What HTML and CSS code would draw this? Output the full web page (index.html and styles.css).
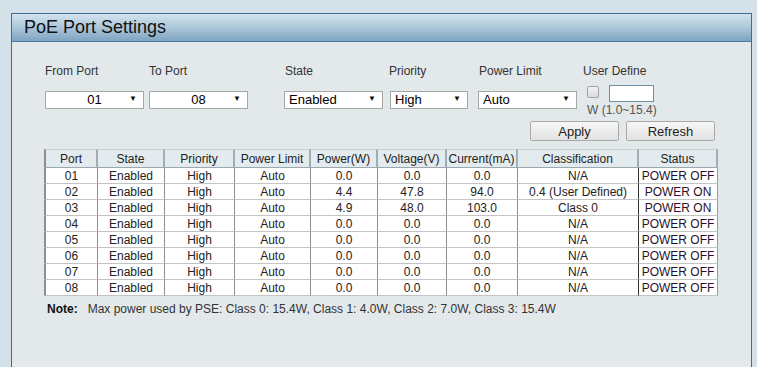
FILE: index.html
```html
<!DOCTYPE html>
<html lang="en">
<head>
  <meta charset="UTF-8">
  <title>PoE Port Settings</title>
  <link rel="stylesheet" href="styles.css">
</head>
<body>
  <div class="panel">
    <div class="panel-head">PoE Port Settings</div>
    <div class="panel-body">
      <div class="form-row">
        <div class="field f-from">
          <label>From Port</label>
          <span class="select w99"><select class="center"><option>01</option></select></span>
        </div>
        <div class="field f-to">
          <label>To Port</label>
          <span class="select w99"><select class="center"><option>08</option></select></span>
        </div>
        <div class="field f-state">
          <label>State</label>
          <span class="select w99"><select><option>Enabled</option></select></span>
        </div>
        <div class="field f-prio">
          <label>Priority</label>
          <span class="select w78"><select><option>High</option></select></span>
        </div>
        <div class="field f-limit">
          <label>Power Limit</label>
          <span class="select w99"><select><option>Auto</option></select></span>
        </div>
        <div class="field f-user">
          <label>User Define</label>
          <div class="user-inputs">
            <input type="checkbox" class="check">
            <input type="text" class="watt">
          </div>
          <div class="hint">W (1.0~15.4)</div>
        </div>
      </div>

      <div class="buttons">
        <button class="btn">Apply</button>
        <button class="btn">Refresh</button>
      </div>

      <table class="ports">
        <thead>
          <tr>
            <th class="c-port">Port</th>
            <th class="c-state">State</th>
            <th class="c-prio">Priority</th>
            <th class="c-limit">Power Limit</th>
            <th class="c-power">Power(W)</th>
            <th class="c-volt">Voltage(V)</th>
            <th class="c-curr">Current(mA)</th>
            <th class="c-class">Classification</th>
            <th class="c-status">Status</th>
          </tr>
        </thead>
        <tbody id="rows"></tbody>
      </table>

      <p class="note"><b>Note:</b><span>Max power used by PSE: Class 0: 15.4W, Class 1: 4.0W, Class 2: 7.0W, Class 3: 15.4W</span></p>
    </div>
  </div>

  <script>
    const ports = [
      ["01", "0.0", "0.0", "0.0", "N/A", "POWER OFF"],
      ["02", "4.4", "47.8", "94.0", "0.4 (User Defined)", "POWER ON"],
      ["03", "4.9", "48.0", "103.0", "Class 0", "POWER ON"],
      ["04", "0.0", "0.0", "0.0", "N/A", "POWER OFF"],
      ["05", "0.0", "0.0", "0.0", "N/A", "POWER OFF"],
      ["06", "0.0", "0.0", "0.0", "N/A", "POWER OFF"],
      ["07", "0.0", "0.0", "0.0", "N/A", "POWER OFF"],
      ["08", "0.0", "0.0", "0.0", "N/A", "POWER OFF"]
    ];

    const tbody = document.getElementById("rows");
    for (const p of ports) {
      const tr = document.createElement("tr");
      const cells = [p[0], "Enabled", "High", "Auto", p[1], p[2], p[3], p[4], p[5]];
      cells.forEach((text, i) => {
        const td = document.createElement("td");
        td.textContent = text;
        if (i === 8) td.className = "status";
        tr.appendChild(td);
      });
      tbody.appendChild(tr);
    }
  </script>
</body>
</html>
```

FILE: styles.css
```css
body {
  margin: 0;
  background-color: #d5e1e8;
  font-family: "Liberation Sans", Arial, sans-serif;
  color: #333;
  overflow: hidden;
}

.panel {
  box-sizing: border-box;
  margin: 13px 0 0 11px;
  width: 741px;
  height: calc(100vh - 13px);
  border: 1px solid #3d6d92;
  border-bottom: none;
  background: #e3e8eb;
}

.panel-head {
  height: 27px;
  line-height: 26px;
  padding-left: 12px;
  font-size: 18px;
  color: #111;
  background: linear-gradient(to bottom, #d2e3ee 0%, #b0cadc 45%, #7ea4c2 100%);
  border-bottom: 1px solid #4d7a9c;
}

.panel-body {
  padding: 22px 0 0 33px;
}

.form-row {
  display: flex;
  align-items: flex-start;
}

.field {
  display: flex;
  flex-direction: column;
}

.field label {
  font-size: 12px;
  height: 14px;
  line-height: 14px;
  margin-bottom: 12px;
}

.f-from { width: 104px; }
.f-to { width: 135px; }
.f-state { width: 106px; }
.f-state label,
.f-limit label { padding-left: 1px; }
.f-prio { width: 88px; }
.f-prio label { margin-left: -1px; }
.f-limit { width: 105px; }

.select {
  position: relative;
  display: block;
  height: 18px;
}

.select.w99 { width: 99px; }
.select.w78 { width: 78px; }

.select select {
  appearance: none;
  -webkit-appearance: none;
  width: 100%;
  height: 18px;
  margin: 0;
  padding: 0 18px 0 4px;
  border: 1px solid #a6a6a6;
  background: #fff;
  font-family: "Liberation Sans", Arial, sans-serif;
  font-size: 13px;
  color: #000;
  line-height: 16px;
}

.select select.center {
  text-align-last: center;
  padding-left: 18px;
}

.select::after {
  content: "\25BC";
  position: absolute;
  right: 7px;
  top: 4px;
  font-size: 8px;
  line-height: 10px;
  color: #111;
  pointer-events: none;
}

.user-inputs {
  display: flex;
  align-items: flex-start;
  margin-top: -5px;
  padding-left: 4px;
}

.check {
  appearance: none;
  -webkit-appearance: none;
  box-sizing: border-box;
  width: 12px;
  height: 12px;
  margin: 1px 10px 0 0;
  border: 1px solid #a3a3a3;
  border-radius: 2px;
  background: linear-gradient(to bottom, #f2f2f2, #dcdcdc);
}

.watt {
  width: 43px;
  height: 15px;
  padding: 0;
  margin: 0;
  border: 1px solid #6f8fa6;
  background: #fff;
}

.hint {
  font-size: 12px;
  line-height: 14px;
  color: #555;
  padding-left: 4px;
  margin-top: 1px;
}

.buttons {
  display: flex;
  gap: 7px;
  margin: 4px 0 0 485px;
}

.btn {
  width: 89px;
  height: 20px;
  padding: 0;
  border: 1px solid #a9a9a9;
  border-radius: 2px;
  background: linear-gradient(to bottom, #f7f7f7, #e2e2e2);
  font-family: "Liberation Sans", Arial, sans-serif;
  font-size: 13px;
  color: #222;
}

.ports {
  margin: 8px 0 0 -1px;
  width: 674px;
  table-layout: fixed;
  border-collapse: separate;
  border-spacing: 0;
  background: #fff;
  font-size: 12px;
}

.ports th,
.ports td {
  box-sizing: border-box;
  padding: 0;
  text-align: center;
  color: #222;
}

.ports th {
  height: 19px;
  padding-top: 1px;
  font-weight: normal;
  background: #e4ebee;
  border-top: 1px solid #c3d0d6;
  border-right: 2px solid #9fafb7;
  border-bottom: 1px solid #9aa9b0;
}

.ports td {
  height: 16px;
  padding-top: 1px;
  line-height: 14px;
  border-right: 1px solid #8f8f8f;
  border-bottom: 1px solid #c4c4c4;
}

.ports th:first-child,
.ports td:first-child {
  border-left: 2px solid #8d8d8d;
}

.ports td:nth-child(8) {
  border-right: 1px solid #333;
}

.ports td.status {
  color: #2a102a;
  border-right: 1px solid #999;
}

.c-port { width: 54px; }
.c-state { width: 67px; }
.c-prio { width: 70px; }
.c-limit { width: 76px; }
.c-power { width: 67px; }
.c-volt { width: 69px; }
.c-curr { width: 71px; }
.c-class { width: 121px; }
.c-status { width: 79px; }

.note {
  margin: 6px 0 0 2px;
  font-size: 12px;
  color: #333;
}

.note b {
  color: #111;
  margin-right: 10px;
}
```
